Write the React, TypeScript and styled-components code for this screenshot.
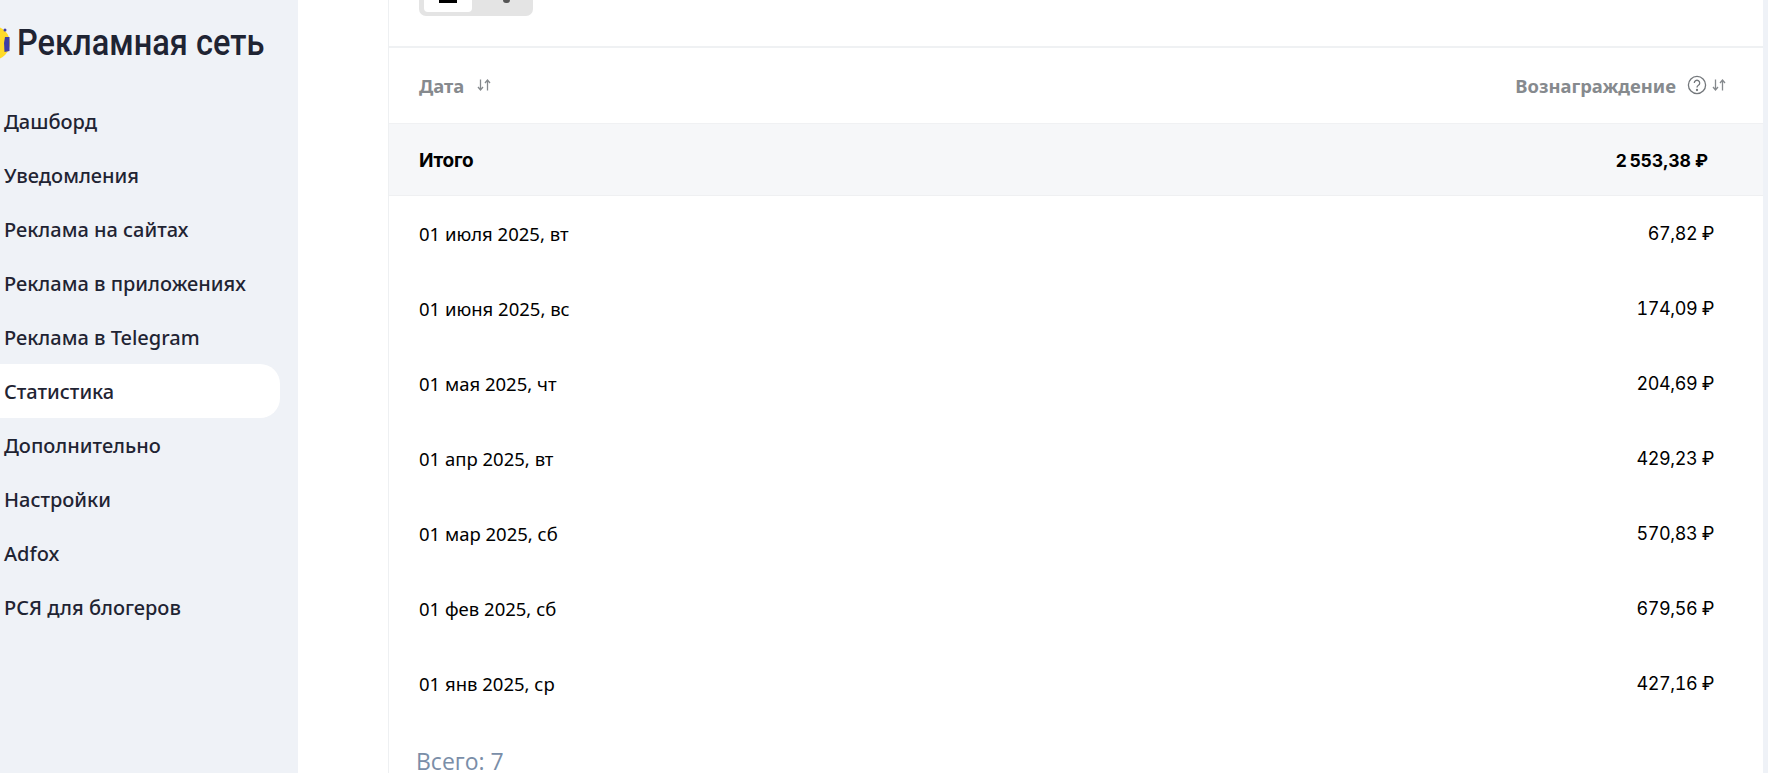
import React from "react";
import styled, { createGlobalStyle } from "styled-components";

const Global = createGlobalStyle`
  html, body { margin: 0; padding: 0; height: 100%; overflow: hidden; background: #eff2f7; }
  #root { height: 100%; }
`;

const Page = styled.div`
  display: flex;
  width: 1768px;
  height: 773px;
  overflow: hidden;
  background: #eff2f7;
`;

const Sidebar = styled.aside`
  flex: 0 0 298px;
  min-width: 0;
  box-sizing: border-box;
  padding: 24px 18px 0 0;
  background: #eff2f7;
`;

const Brand = styled.div`
  display: flex;
  align-items: center;
  height: 38px;
  margin-left: -24px;
  gap: 7px;
`;

const BrandMark = styled.svg`
  flex-shrink: 0;
  width: 34px;
  height: 34px;
`;

const BrandTitle = styled.span`
  font-family: "Roboto", sans-serif;
  font-weight: 500;
  font-size: 37px;
  line-height: 38px;
  color: #1f2433;
  white-space: nowrap;
  transform: scaleX(0.88);
  transform-origin: left center;
`;

const Nav = styled.nav`
  display: flex;
  flex-direction: column;
  margin-top: 32px;
`;

const NavItem = styled.div<{ $active?: boolean }>`
  height: 54px;
  display: flex;
  align-items: center;
  padding-left: 4px;
  font-family: "Noto Sans", sans-serif;
  font-weight: 500;
  font-size: 20px;
  color: #1f2433;
  border-radius: 0 20px 20px 0;
  background: ${(p) => (p.$active ? "#fff" : "transparent")};
`;

const Main = styled.main`
  flex: 1;
  min-width: 0;
  background: #fff;
  padding: 0 0 0 90px;
  margin-right: 5px;
`;

const Card = styled.section`
  background: #fff;
  border-left: 1px solid #eef0f2;
  height: 100%;
`;

const Toolbar = styled.div`
  height: 48px;
  box-sizing: border-box;
  padding-left: 30px;
  border-bottom: 2px solid #eff1f3;
  overflow: hidden;
`;

const Toggle = styled.div`
  width: 114px;
  height: 16px;
  display: flex;
  align-items: flex-end;
  box-sizing: border-box;
  padding: 0 5px 4px;
  background: #e4e4e4;
  border-radius: 0 0 7px 7px;
`;

const ToggleOn = styled.div`
  width: 48px;
  height: 12px;
  background: #fff;
  border-radius: 0 0 4px 4px;
  display: flex;
  justify-content: center;
  align-items: flex-start;
`;

const ToggleBar = styled.div`
  width: 18px;
  height: 3px;
  background: #000;
`;

const ToggleOff = styled.div`
  flex: 1;
  height: 12px;
  display: flex;
  justify-content: center;
`;

const ToggleDot = styled.div`
  width: 7px;
  height: 3px;
  margin-left: 12px;
  background: #555;
  border-radius: 0 0 4px 4px;
`;

const HeadRow = styled.div`
  height: 76px;
  display: flex;
  align-items: center;
  justify-content: space-between;
  padding: 0 36px 1px 30px;
  border-bottom: 1px solid #f0f1f3;
  box-sizing: border-box;
`;

const HeadCell = styled.div`
  display: flex;
  align-items: center;
  font-family: "Noto Sans", sans-serif;
  font-weight: 700;
  font-size: 18.4px;
  color: #868a8e;
`;

const SortIcon = styled.svg<{ $tight?: boolean }>`
  width: 16px;
  height: 14px;
  color: #85898d;
  margin-left: ${(p) => (p.$tight ? "4px" : "12px")};
`;

const HelpIcon = styled.svg`
  width: 20px;
  height: 20px;
  margin-left: 11px;
  color: #73777b;
`;

const TotalRow = styled.div`
  height: 72px;
  display: flex;
  align-items: center;
  justify-content: space-between;
  padding: 1px 55px 0 30px;
  background: #f6f7f9;
  border-bottom: 1px solid #eff0f2;
  box-sizing: border-box;
  font-family: "Inter", sans-serif;
  font-weight: 700;
  color: #000;
`;

const TotalLabel = styled.span`
  font-size: 19px;
  letter-spacing: -0.2px;
`;

const TotalValue = styled.span`
  font-size: 17.5px;
  letter-spacing: -0.9px;
`;

const DataRow = styled.div`
  height: 75px;
  display: flex;
  align-items: center;
  justify-content: space-between;
  padding: 0 49px 0 30px;
  font-family: "Noto Sans", sans-serif;
  font-size: 18.5px;
  color: #000;
`;

const Amount = styled.span`
  font-family: "Inter", sans-serif;
  font-size: 18px;
  letter-spacing: -0.4px;
  font-variant-numeric: tabular-nums;
`;

const Footer = styled.div`
  padding: 29px 0 0 27px;
  font-family: "Open Sans", sans-serif;
  font-size: 23px;
  line-height: 22px;
  color: #7a8ea8;
`;

const Sort = ({ tight }: { tight?: boolean }) => (
  <SortIcon $tight={tight} viewBox="0 0 16 14" fill="none" stroke="currentColor" strokeWidth="1.3">
    <path d="M4.5 1.5v10M2 9l2.5 3L7 9M11.5 12.5v-10M9 5l2.5-3L14 5" />
  </SortIcon>
);

const nav = ["Дашборд", "Уведомления", "Реклама на сайтах", "Реклама в приложениях", "Реклама в Telegram", "Статистика", "Дополнительно", "Настройки", "Adfox", "РСЯ для блогеров"];
const rows = [
  ["01 июля 2025, вт", "67,82 ₽"],
  ["01 июня 2025, вс", "174,09 ₽"],
  ["01 мая 2025, чт", "204,69 ₽"],
  ["01 апр 2025, вт", "429,23 ₽"],
  ["01 мар 2025, сб", "570,83 ₽"],
  ["01 фев 2025, сб", "679,56 ₽"],
  ["01 янв 2025, ср", "427,16 ₽"],
];

export default function App() {
  return (
    <Page>
      <Global />
      <Sidebar>
        <Brand>
          <BrandMark viewBox="0 0 34 34">
            <circle cx="17" cy="17" r="17" fill="#ffdb29" />
            <path d="M29 11h4.5v14l-5 1-.5-9z" fill="#3f3fa5" />
            <circle cx="29" cy="4" r="1.5" fill="#3f3fa5" />
          </BrandMark>
          <BrandTitle>Рекламная сеть</BrandTitle>
        </Brand>
        <Nav>
          {nav.map((n) => (
            <NavItem key={n} $active={n === "Статистика"}>{n}</NavItem>
          ))}
        </Nav>
      </Sidebar>
      <Main>
        <Card>
          <Toolbar>
            <Toggle>
              <ToggleOn><ToggleBar /></ToggleOn>
              <ToggleOff><ToggleDot /></ToggleOff>
            </Toggle>
          </Toolbar>
          <HeadRow>
            <HeadCell>Дата<Sort /></HeadCell>
            <HeadCell>
              Вознаграждение
              <HelpIcon viewBox="0 0 20 20" fill="none" stroke="currentColor" strokeWidth="1.3">
                <circle cx="10" cy="10" r="8.6" />
                <path d="M7.3 8a2.7 2.7 0 1 1 4.1 2.3c-.9.6-1.4 1-1.4 2.1" />
                <circle cx="10" cy="15" r=".5" />
              </HelpIcon>
              <Sort tight />
            </HeadCell>
          </HeadRow>
          <TotalRow><TotalLabel>Итого</TotalLabel><TotalValue>2{"\u202f"}553,38 ₽</TotalValue></TotalRow>
          {rows.map(([d, v]) => (
            <DataRow key={d}><span>{d}</span><Amount>{v}</Amount></DataRow>
          ))}
          <Footer>Всего: 7</Footer>
        </Card>
      </Main>
    </Page>
  );
}
